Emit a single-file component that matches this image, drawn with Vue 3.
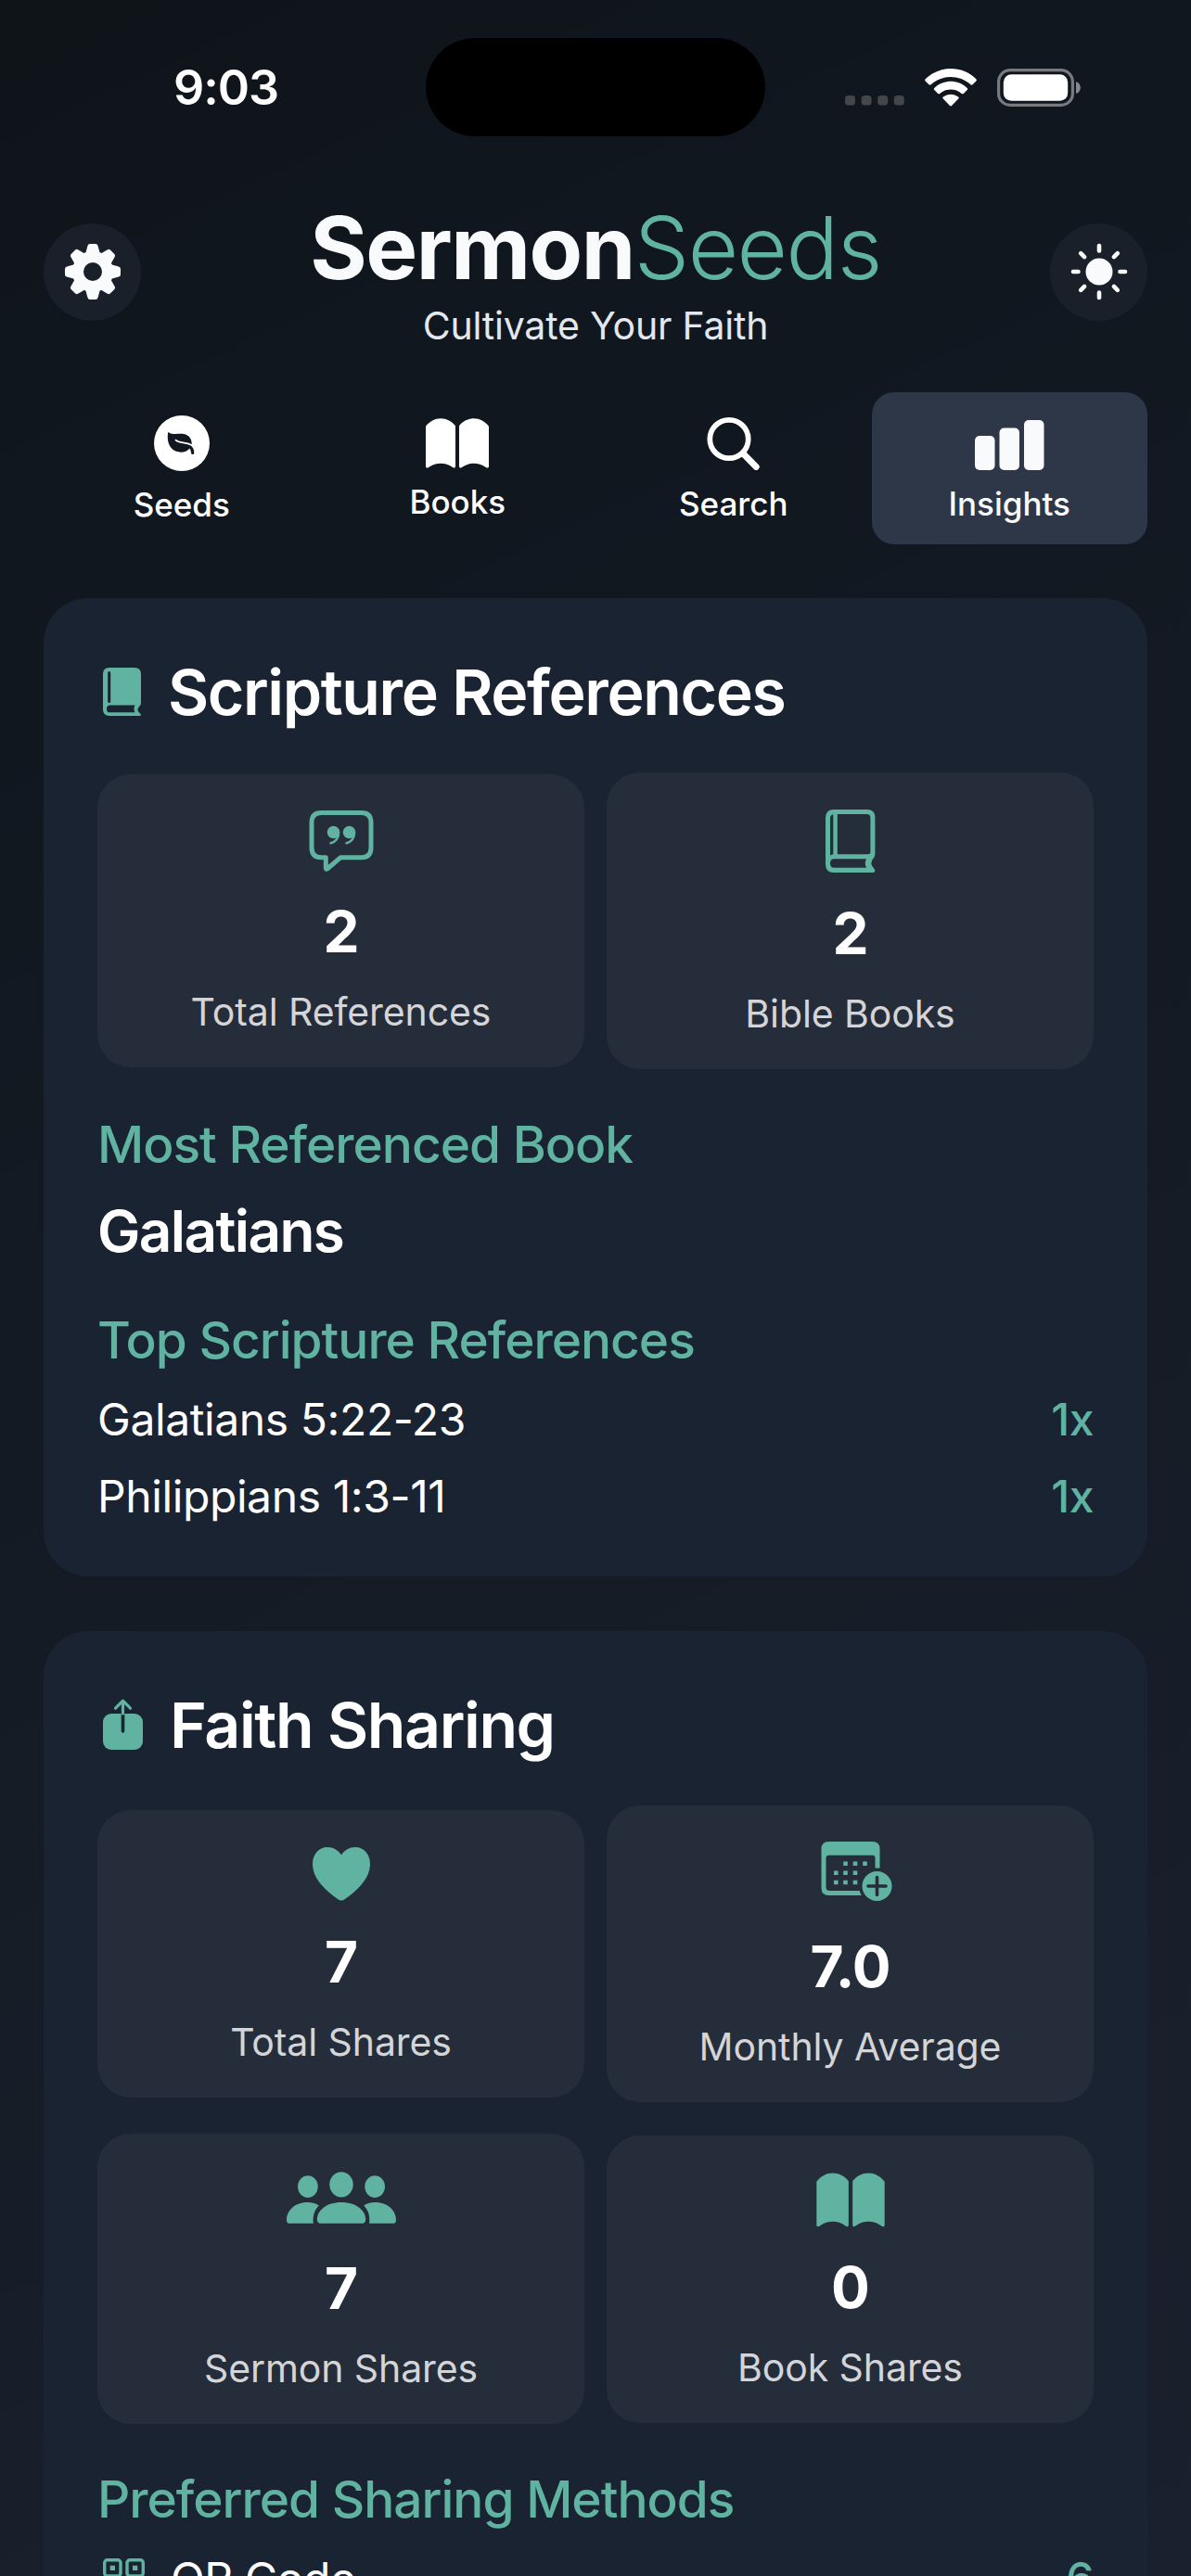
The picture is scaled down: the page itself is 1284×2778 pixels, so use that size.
<script setup>
import { ref } from 'vue';

const activeTab = ref('Insights');

const bookFill =
  '<path d="M0 8.5C4 3 10 0 16 0s12 3 15.7 8v43.5q-.7 2.5-3.2.5c-7.5-5.4-17.5-5.4-25 0q-3 2-3.5-.5z"/><path d="M67.4 8.5C63.4 3 57.4 0 51.4 0s-12 3-15.7 8v43.5q.7 2.5 3.2.5c7.5-5.4 17.5-5.4 25 0q3 2 3.5-.5z"/>';

const icons = {
  leaf: {
    w: 60,
    h: 60,
    box: '0 0 60 60',
    body: '<circle cx="30" cy="30" r="30"/><path fill="#10171f" d="M16 18.3C20 21.5 27 19.2 32 20c6 1 9 5.5 8.7 11.5L38 36c-2 2.5-6 4-10.5 3.6C18 38.5 13.5 30 15 19q.3-1.2 1-.7z"/><path fill="none" stroke="#10171f" stroke-width="3.2" stroke-linecap="round" d="M38.5 33.5c2.5 2 3.3 4 3.2 7"/><path fill="none" stroke="#fff" stroke-width="1.8" stroke-linecap="round" d="M23.5 26.7C27.5 30.5 34 28.2 40.5 32"/>',
  },
  books: { w: 68, h: 54, box: '0 0 67.4 53', body: bookFill },
  search: {
    w: 57,
    h: 58,
    box: '0 0 57 58',
    body: '<circle cx="24" cy="24.5" r="20.7" fill="none" stroke="currentColor" stroke-width="5.7"/><path d="M40 41l13.3 13.5" stroke="currentColor" stroke-width="6.8" stroke-linecap="round"/>',
  },
  bars: {
    w: 75,
    h: 57,
    box: '0 0 75 57',
    body: '<rect y="20" width="21.5" height="37" rx="5"/><rect x="26.5" y="11.5" width="21.5" height="45.5" rx="5"/><rect x="53" y="3" width="21.5" height="54" rx="5"/>',
  },
  bookClosed: {
    w: 42,
    h: 52,
    box: '0 0 42 52',
    body: '<path fill-rule="evenodd" d="M7 0h27q7 0 7 7v31q0 2-1.5 3.5-3.5 3.5-1 6.500 2.500 2 2.500 3 0 1-1.500 1H7q-7 0-7-7V7q0-7 7-7zM6.700 4q-1.500 0-1.500 1.500v31q0 1.500 1.500 1.500t1.500-1.500v-31Q8.200 4 6.700 4zM7.500 40.500q-3.500 0-3.500 3.900t3.500 3.900h27q-2-3.800 0-7.800z"/>',
  },
  share: {
    w: 44,
    h: 56,
    box: '0 0 44 56',
    body: '<rect y="16" width="43" height="39" rx="9"/><path d="M21.5 14v21" stroke="#1a2332" stroke-width="3.6" stroke-linecap="round"/><path d="M21.5 16V2.5M13.5 10.2l8-8 8 8" fill="none" stroke="currentColor" stroke-width="3.2" stroke-linecap="round" stroke-linejoin="round"/>',
  },
  quote: {
    w: 70,
    h: 72,
    box: '0 -3 69 72',
    body: '<path fill="none" stroke="currentColor" stroke-width="5" stroke-linejoin="round" d="M13 2.5h43q10.5 0 10.5 10.5v27q0 10.8-10.5 10.8H33.5L19.3 63q-1.5 1-1.5-1V50.8H13Q2.5 50.8 2.5 40V13Q2.5 2.5 13 2.5z"/><circle cx="26" cy="23.5" r="6.8"/><path d="M31.5 23.5c.4 6-3.3 10.5-8.500 11.700" fill="none" stroke="currentColor" stroke-width="2.500" stroke-linecap="round"/><circle cx="43" cy="23.500" r="6.800"/><path d="M48.500 23.500c.4 6-3.300 10.500-8.500 11.700" fill="none" stroke="currentColor" stroke-width="2.500" stroke-linecap="round"/>',
  },
  bible: {
    w: 54,
    h: 76,
    box: '0 -4 54 76',
    body: '<path fill-rule="evenodd" d="M9 0h36q8.4 0 8.4 8.5V48q0 2.5-2.1 5-3.8 5-.3 9 2.4 2.5 2.4 4 0 2-2.4 2H9q-9 0-9-9V9q0-9 9-9zM8.3 5.3Q5.3 6 5 9v40.6q1.5-1 3.3-1.4zM12.8 5v43.3H46q2.4 0 2.4-2.3V9q0-4-3.9-4zM9 53.2q-4 0-4 4.8t4 4.8h35q-2.5-4.8 0-9.6z"/>',
  },
  heart: {
    w: 62,
    h: 66,
    box: '0 -4 62 66',
    body: '<path d="M31 8.500C27.500 3 22 0 16 0 6.500 0 0 8 0 18c0 16 14 29 27.500 38.300q3.500 2.500 7 0C48 47 62 34 62 18 62 8 55.500 0 46 0c-6 0-11.500 3-15 8.500z"/>',
  },
  calendar: {
    w: 90,
    h: 76,
    box: '-13.5 -3 90 76',
    body: '<path fill-rule="evenodd" d="M8 0h47q8 0 8 8v42q0 8-8 8H8q-8 0-8-8V8q0-8 8-8zM8 14.7q-3 0-3 3V49q0 4 4 4h45q4 0 4-4V17.7q0-3-3-3z"/><path d="M23.7 21.4h4.6v4.6h-4.600zM34.200 21.400h4.600v4.600h-4.600zM44.700 21.400h4.600v4.600h-4.600zM13.500 31.400h4.600v4.600h-4.600zM23.700 31.400h4.600v4.600h-4.600zM34.200 31.400h4.600v4.600h-4.600zM13.500 41.700h4.600v4.600h-4.600zM23.700 41.700h4.600v4.600h-4.600zM34.200 41.700h4.600v4.600h-4.600z"/><circle cx="60" cy="48" r="19.500" fill="#252d3b"/><circle cx="60" cy="48" r="16"/><path d="M60 38.500v19M50.500 48h19" stroke="#252d3b" stroke-width="3.600" stroke-linecap="round"/>',
  },
  people: {
    w: 118,
    h: 69,
    box: '0 -5 118.6 69',
    body: '<ellipse cx="59.3" cy="13.7" rx="12.8" ry="13.7"/><ellipse cx="23" cy="16" rx="10.9" ry="12"/><ellipse cx="95.6" cy="16" rx="10.9" ry="12"/><path d="M38 56q-5 0-5-4.5C33 42 43 33 59.3 33s26.3 9 26.3 18.5q0 4.5-4.6 4.5z"/><path d="M3.5 56Q0 56 0 52c0-9 8-19 22.8-19 5.2 0 9.2 1.3 12.2 3.5-4.5 4.5-7 10.5-6 19.5z"/><path d="M115.1 56q3.5 0 3.5-4c0-9-8-19-22.8-19-5.2 0-9.2 1.3-12.2 3.5 4.5 4.5 7 10.5 6 19.5z"/>',
  },
  bookOpen: { w: 74, h: 66, box: '-.3 -4.2 68 60.6', body: bookFill },
  qr: {
    w: 46,
    h: 46,
    box: '0 0 46 46',
    body: '<g fill="none" stroke="currentColor" stroke-width="3.4"><rect x="1.7" y="1.7" width="17.3" height="17.3" rx="3"/><rect x="26" y="1.7" width="17.3" height="17.3" rx="3"/><rect x="1.7" y="26" width="17.3" height="17.3" rx="3"/></g><path d="M7.7 7.700H13V13H7.700zM32 7.700h5.300V13H32zM7.700 32H13v5.300H7.700zM25 25h6v6h-6zM38 25h6v6h-6zM32 32h6v6h-6z"/>',
  },
};

const tabs = [
  { label: 'Seeds', icon: icons.leaf },
  { label: 'Books', icon: icons.books },
  { label: 'Search', icon: icons.search },
  { label: 'Insights', icon: icons.bars },
];

const scriptureStats = [
  { label: 'Total References', value: '2', icon: icons.quote },
  { label: 'Bible Books', value: '2', icon: icons.bible },
];

const sharingStats = [
  { label: 'Total Shares', value: '7', icon: icons.heart },
  { label: 'Monthly Average', value: '7.0', icon: icons.calendar },
  { label: 'Sermon Shares', value: '7', icon: icons.people },
  { label: 'Book Shares', value: '0', icon: icons.bookOpen },
];

const references = [
  { name: 'Galatians 5:22-23', count: 1 },
  { name: 'Philippians 1:3-11', count: 1 },
];

const methods = [{ name: 'QR Code', count: 6, icon: icons.qr }];
</script>

<template>
  <div class="screen">
    <!-- Status bar -->
    <div class="status">
      <div class="time">9:03</div>
      <div class="island"></div>
      <div class="indicators">
        <svg class="signal" width="64" height="41" viewBox="0 0 64 41">
          <rect v-for="i in 4" :key="i" :x="(i - 1) * 17.6" y="29" width="11" height="10.5" rx="3.5" />
        </svg>
        <svg class="wifi" width="56" height="41" viewBox="0 0 56 41">
          <path d="M0.7 11.2C15.5 -3.7 40.5 -3.7 55.3 11.2Q56.4 12.4 55.3 13.5L51.5 17.3Q50.5 18.2 49.5 17.3C37.5 6.2 18.5 6.2 6.5 17.3Q5.5 18.2 4.5 17.3L.7 13.5Q-.4 12.4.7 11.2z" />
          <path d="M10.3 20.9C20 11.5 36 11.5 45.7 20.9Q46.7 22 45.7 23L41.8 26.9Q40.8 27.8 39.8 26.9C33 21 23 21 16.2 26.9Q15.2 27.8 14.2 26.9L10.3 23Q9.3 22 10.3 20.9z" />
          <path d="M19.8 30.6C24.5 26.7 31.5 26.7 36.2 30.6Q37.2 31.6 36.2 32.6L29 40Q28 40.9 27 40L19.8 32.6Q18.8 31.6 19.8 30.6z" />
        </svg>
        <svg class="battery" width="91" height="41" viewBox="0 0 91 41">
          <rect x="1.6" y="1.6" width="79.8" height="37.8" rx="12.5" fill="none" stroke="#777b80" stroke-width="3.2" />
          <rect x="6.8" y="6.2" width="69.4" height="28.6" rx="8.5" fill="#fff" />
          <path d="M85 14C91.5 15.5 91.5 25.5 85 27z" fill="#85898d" />
        </svg>
      </div>
    </div>

    <!-- App header -->
    <header class="header">
      <button class="round">
        <svg width="62" height="62" viewBox="-31 -31 62 62" fill="currentColor">
          <circle r="16" fill="none" stroke="currentColor" stroke-width="12" />
          <path
            v-for="i in 8"
            :key="i"
            :transform="`rotate(${i * 45})`"
            d="M-8 -19L-5.5 -28Q-5 -30 -3 -30H3Q5 -30 5.5 -28L8 -19z"
          />
        </svg>
      </button>
      <div class="brand">
        <h1><b>Sermon</b><span>Seeds</span></h1>
        <p>Cultivate Your Faith</p>
      </div>
      <button class="round">
        <svg width="62" height="62" viewBox="-31 -31 62 62" fill="currentColor">
          <circle r="14.5" />
          <path
            v-for="i in 8"
            :key="i"
            :transform="`rotate(${i * 45})`"
            d="M0 -28V-22.5"
            stroke="currentColor"
            stroke-width="4.6"
            stroke-linecap="round"
          />
        </svg>
      </button>
    </header>

    <!-- Tabs -->
    <nav class="tabs">
      <button
        v-for="tab in tabs"
        :key="tab.label"
        class="tab"
        :class="{ active: tab.label === activeTab }"
        @click="activeTab = tab.label"
      >
        <svg :width="tab.icon.w" :height="tab.icon.h" :viewBox="tab.icon.box" fill="currentColor" v-html="tab.icon.body" />
        <span>{{ tab.label }}</span>
      </button>
    </nav>

    <!-- Scripture references -->
    <section class="card">
      <h2>
        <svg width="42" height="52" :viewBox="icons.bookClosed.box" fill="currentColor" v-html="icons.bookClosed.body" />
        <span>Scripture References</span>
      </h2>
      <div class="stats">
        <div v-for="stat in scriptureStats" :key="stat.label" class="stat">
          <svg :width="stat.icon.w" :height="stat.icon.h" :viewBox="stat.icon.box" fill="currentColor" v-html="stat.icon.body" />
          <strong>{{ stat.value }}</strong>
          <span>{{ stat.label }}</span>
        </div>
      </div>
      <h3>Most Referenced Book</h3>
      <p class="top-book">Galatians</p>
      <h3>Top Scripture References</h3>
      <ul class="list">
        <li v-for="item in references" :key="item.name">
          <span>{{ item.name }}</span>
          <em>{{ item.count }}x</em>
        </li>
      </ul>
    </section>

    <!-- Faith sharing -->
    <section class="card">
      <h2>
        <svg width="44" height="56" :viewBox="icons.share.box" fill="currentColor" v-html="icons.share.body" />
        <span>Faith Sharing</span>
      </h2>
      <div class="stats">
        <div v-for="stat in sharingStats" :key="stat.label" class="stat">
          <svg :width="stat.icon.w" :height="stat.icon.h" :viewBox="stat.icon.box" fill="currentColor" v-html="stat.icon.body" />
          <strong>{{ stat.value }}</strong>
          <span>{{ stat.label }}</span>
        </div>
      </div>
      <h3>Preferred Sharing Methods</h3>
      <ul class="list">
        <li v-for="item in methods" :key="item.name">
          <svg :width="item.icon.w" :height="item.icon.h" :viewBox="item.icon.box" fill="currentColor" v-html="item.icon.body" />
          <span>{{ item.name }}</span>
          <em>{{ item.count }}</em>
        </li>
      </ul>
    </section>
  </div>
</template>

<style>
body {
  background: #10161e;
}
</style>

<style scoped>
.screen {
  box-sizing: border-box;
  width: 1284px;
  height: 2778px;
  overflow: hidden;
  background: linear-gradient(155deg, #0f1419 0%, #10171f 20%, #161c26 60%, #1a212e 100%);
  color: #fff;
  font-family: Inter, 'Liberation Sans', sans-serif;
}

h1,
h2,
h3,
p,
ul {
  margin: 0;
  padding: 0;
}

button {
  padding: 0;
  border: 0;
  background: none;
  color: inherit;
  font: inherit;
}

svg {
  display: block;
  flex: none;
  overflow: visible;
}

.status {
  display: grid;
  grid-template-columns: 459px 366px 1fr;
  align-items: center;
  height: 188px;
}

.time {
  padding: 2px 0 0 28px;
  text-align: center;
  font-size: 52px;
  font-weight: 600;
  letter-spacing: -1px;
  line-height: 60px;
}

.island {
  height: 106px;
  border-radius: 53px;
  background: #000;
}

.indicators {
  display: flex;
  padding-left: 86px;
}

.signal {
  fill: #43474c;
}

.wifi {
  margin: 0 22px;
  fill: #fff;
}

.header {
  display: flex;
  align-items: center;
  justify-content: space-between;
  padding: 22px 47px 0;
}

.round {
  display: grid;
  place-items: center;
  width: 105px;
  height: 105px;
  border-radius: 50%;
  background: #19202a;
  color: #f9fafc;
}

.brand {
  text-align: center;
}

.brand h1 {
  font-size: 94px;
  line-height: 114px;
  letter-spacing: -1.5px;
  color: #f9fafc;
}

.brand h1 b {
  font-weight: 700;
}

.brand h1 span {
  font-weight: 300;
  color: #60b3a1;
}

.brand p {
  margin-top: 2px;
  font-size: 41px;
  letter-spacing: -0.2px;
  line-height: 50px;
  color: #e2e8f0;
}

.tabs {
  display: grid;
  grid-template-columns: repeat(4, 1fr);
  padding: 47px 47px 0;
}

.tab {
  display: flex;
  flex-direction: column;
  align-items: center;
  justify-content: center;
  gap: 18px;
  height: 164px;
  border-radius: 24px;
  font-size: 35px;
  font-weight: 500;
  line-height: 36px;
}

.tab.active {
  background: #2d3748;
  color: #f9fafc;
}

.card {
  margin: 58px 47px 0;
  padding: 58px;
  border-radius: 48px;
  background: #1a2332;
}

.card + .card {
  margin-top: 59px;
}

.card h2 {
  display: flex;
  align-items: center;
  gap: 28px;
  height: 85px;
  padding: 0 0 1px 6px;
  font-size: 68px;
  font-weight: 600;
  letter-spacing: -1.4px;
}

.card h2 svg,
.stat svg,
.list svg {
  color: #60b3a1;
}

.stats {
  display: grid;
  grid-template-columns: 1fr 1fr;
  align-items: center;
  gap: 34px 24px;
  margin-top: 44px;
}

.stat {
  display: flex;
  flex-direction: column;
  align-items: center;
  padding: 36px 0 35px;
  border-radius: 36px;
  background: #252d3b;
}

.stat strong {
  margin-top: 24px;
  font-size: 62px;
  font-weight: 700;
  letter-spacing: -1px;
  line-height: 76px;
}

.stat span {
  margin-top: 23px;
  font-size: 41px;
  letter-spacing: -0.1px;
  line-height: 50px;
  color: #d3d5d8;
}

.card h3 {
  margin-top: 49px;
  font-size: 55px;
  font-weight: 500;
  letter-spacing: -1px;
  line-height: 64px;
  color: #60b3a1;
}

.top-book {
  margin-top: 26px;
  font-size: 62px;
  font-weight: 600;
  letter-spacing: -1.6px;
  line-height: 72px;
}

.list {
  display: grid;
  gap: 25px;
  margin-top: 24px;
  list-style: none;
}

.list li {
  display: flex;
  align-items: center;
  height: 58px;
  font-size: 48px;
  letter-spacing: -0.4px;
}

.list svg {
  margin: 4px 27px 0 6px;
}

.list em {
  margin-left: auto;
  font-style: normal;
  font-weight: 500;
  color: #60b3a1;
}
</style>
